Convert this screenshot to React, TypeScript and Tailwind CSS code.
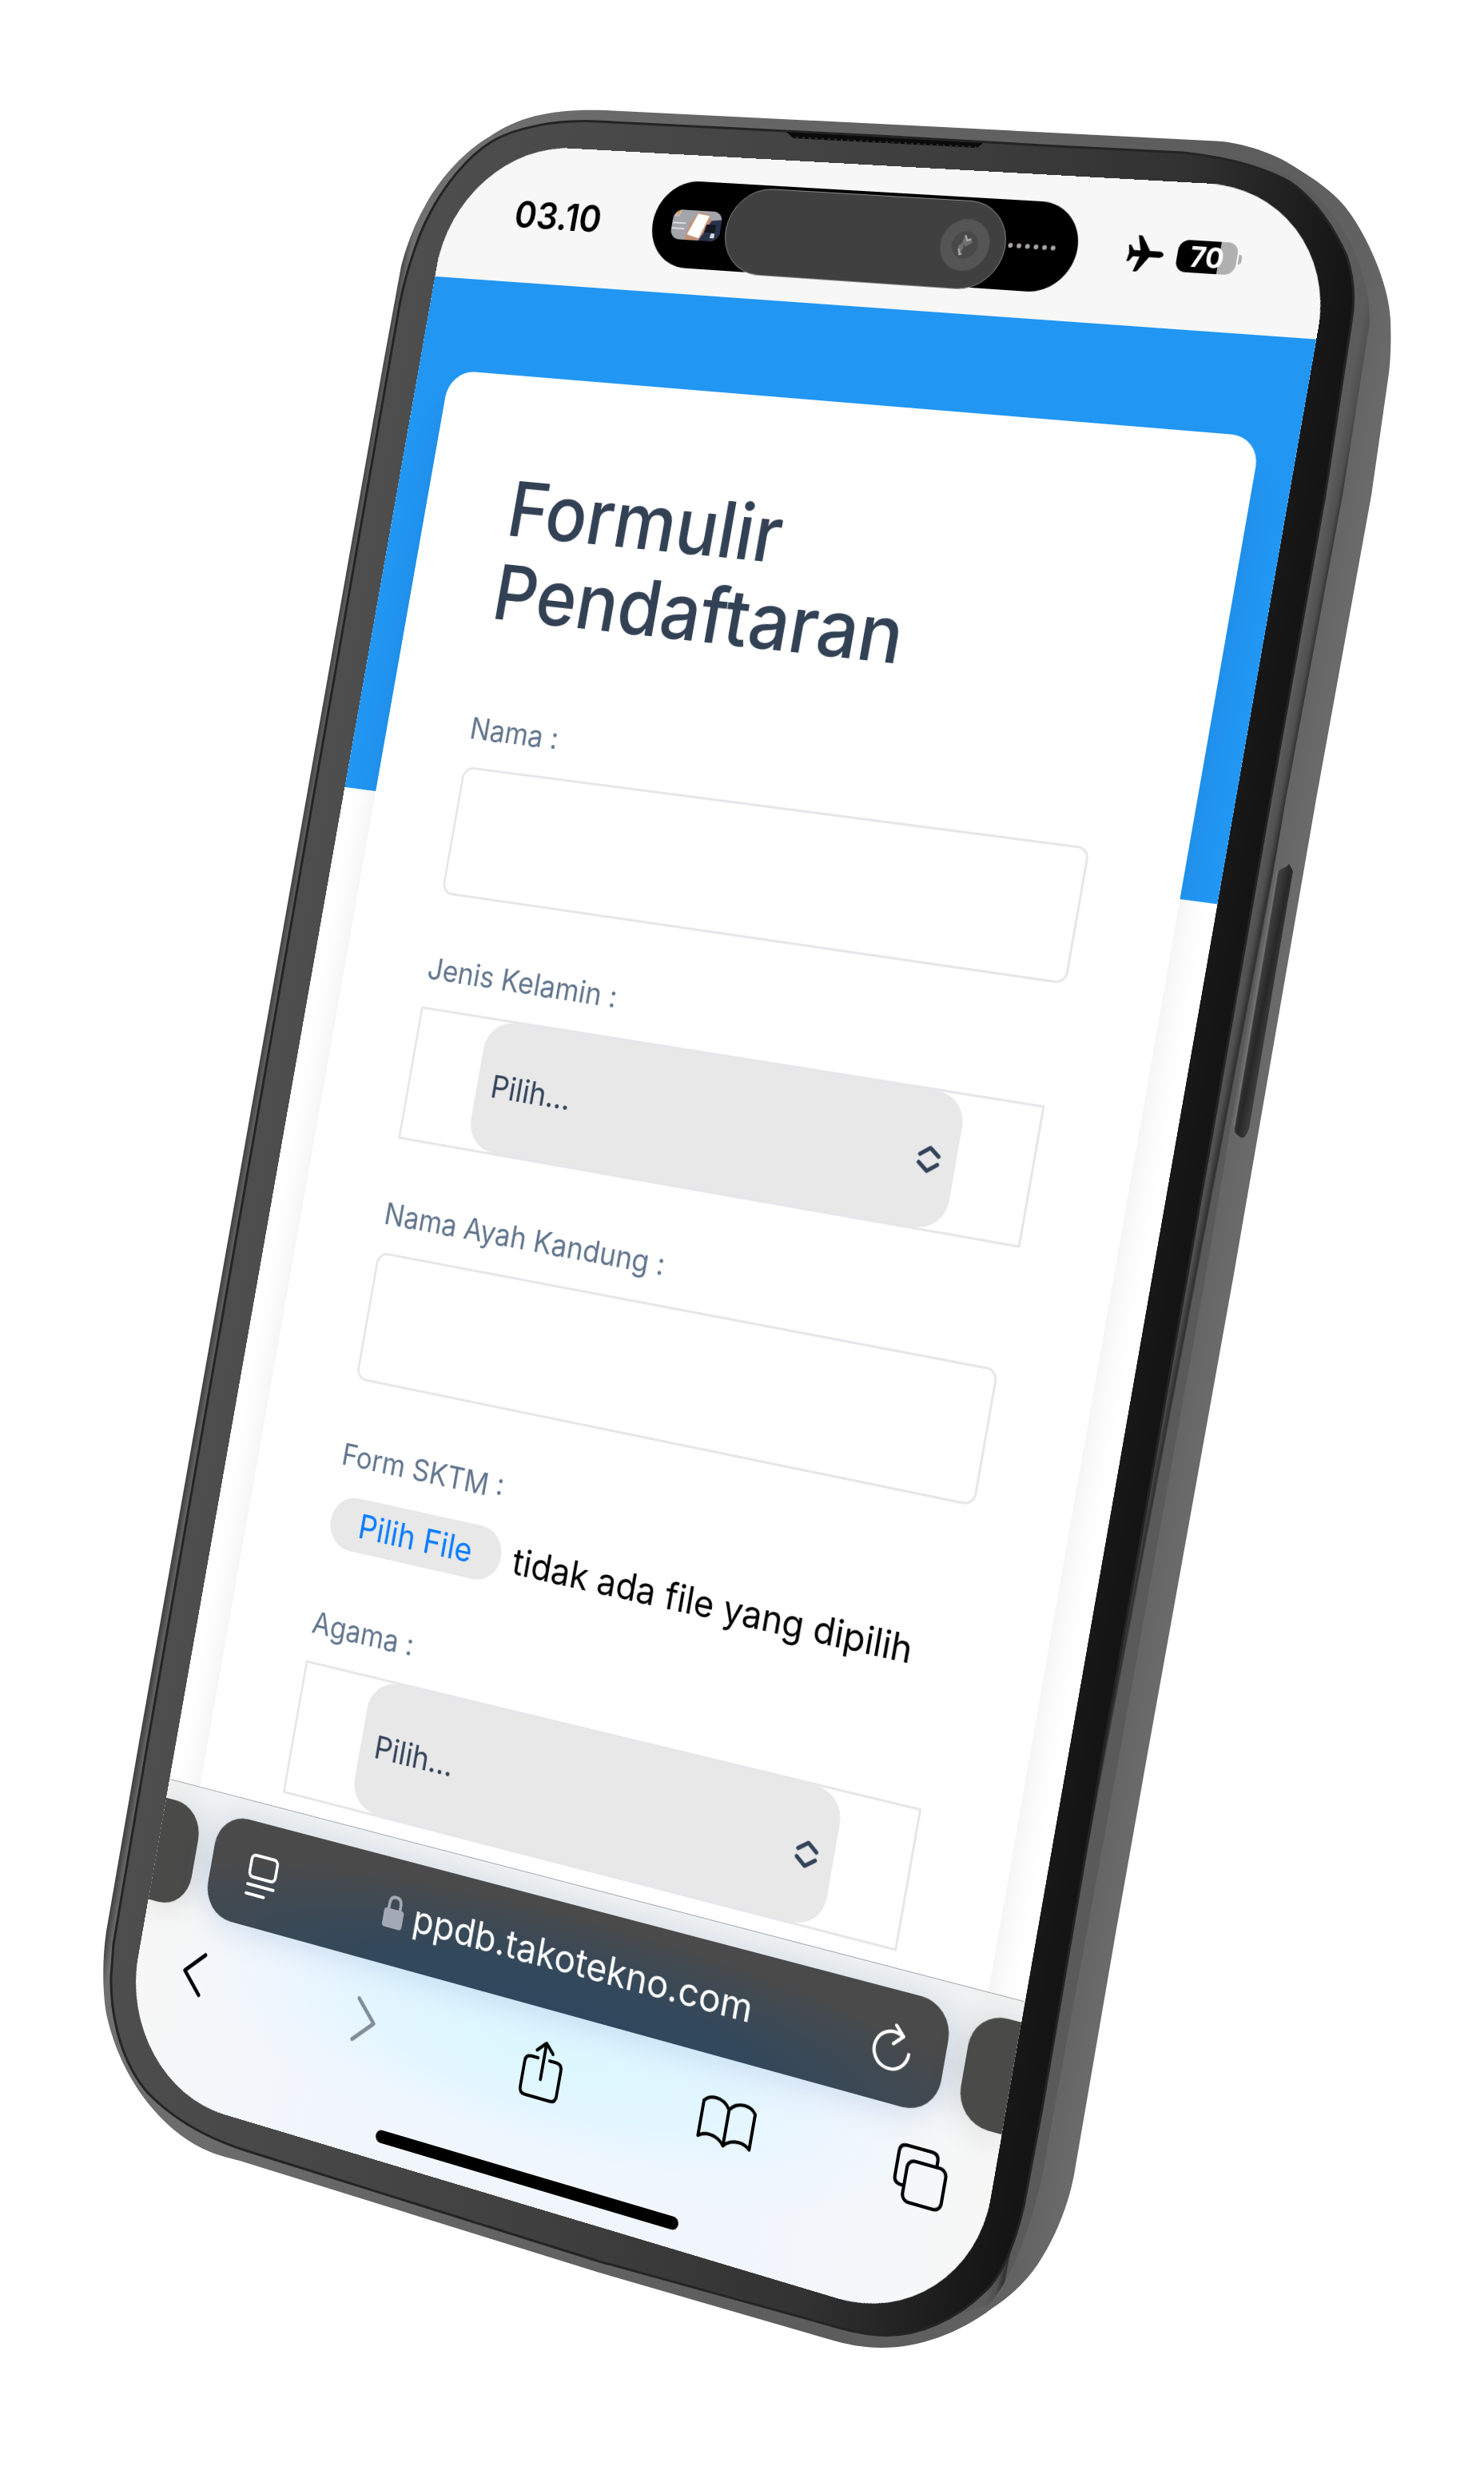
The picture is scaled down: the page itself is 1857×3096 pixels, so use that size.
import { useRef } from 'react'
import type { ReactNode } from 'react'

function DeviceBody() {
  return (
    <svg viewBox="120 140 1617 2816" className="absolute inset-0 size-full overflow-visible" aria-hidden="true">
      <defs>
        <linearGradient id="side" gradientUnits="userSpaceOnUse" x1="480" y1="453" x2="1700" y2="668">
          <stop offset="0" stopColor="#444" />
          <stop offset="0.008" stopColor="#707070" />
          <stop offset="0.3" stopColor="#666" />
          <stop offset="0.8" stopColor="#5c5c5c" />
          <stop offset="0.96" stopColor="#626262" />
          <stop offset="1" stopColor="#6a6a6a" />
        </linearGradient>
        <linearGradient id="ring" gradientUnits="userSpaceOnUse" x1="1590" y1="1000" x2="1611" y2="1004">
          <stop offset="0" stopColor="#5c5c5c" />
          <stop offset="0.55" stopColor="#505050" />
          <stop offset="0.9" stopColor="#303030" />
          <stop offset="1" stopColor="#5a5a5a" />
        </linearGradient>
        <linearGradient id="bezel" gradientUnits="userSpaceOnUse" x1="480" y1="453" x2="1640" y2="658">
          <stop offset="0" stopColor="#4e4e4e" />
          <stop offset="0.5" stopColor="#404040" />
          <stop offset="0.8" stopColor="#323232" />
          <stop offset="0.95" stopColor="#1b1b1b" />
          <stop offset="1" stopColor="#141414" />
        </linearGradient>
        <linearGradient id="key" gradientUnits="userSpaceOnUse" x1="1572" y1="1250" x2="1592" y2="1254">
          <stop offset="0" stopColor="#3c3c3c" />
          <stop offset="0.5" stopColor="#272727" />
          <stop offset="1" stopColor="#3a3a3a" />
        </linearGradient>
      </defs>
      <path
        fill="url(#side)"
        d="M480 453L502 333C520 262 560 202 614 170C650 146 690 136 757 138L1180 159L1529 177C1565 181 1600 195 1622 210C1648 226 1667 240 1680 255C1704 282 1738 350 1740 400C1741 430 1740 450 1738 467L1716 620L1647 1000L1543 1600L1435 2200L1397 2414L1346 2710C1340 2750 1325 2793 1299 2833C1282 2858 1262 2875 1241 2889C1200 2920 1150 2938 1103 2938C1080 2938 1060 2934 1036 2927L750 2844L300 2704C284 2700 268 2696 252 2688C200 2662 150 2600 133 2520C128 2490 128 2450 133 2417L174 2180Z"
      />
      <path
        fill="url(#ring)"
        d="M1502 190C1560 196 1600 208 1630 230C1680 270 1714 335 1714 403L1680 620L1609 1000L1508 1600L1400 2200L1310 2690C1300 2760 1270 2850 1237 2884L1190 2900Z"
      />
      <path
        fill="url(#bezel)"
        stroke="#242424"
        strokeWidth="3"
        d="M185 2180L498 393C504 355 520 300 538 267C556 232 585 196 614 178C640 162 690 149 748 152L1100 170L1323 183L1480 191C1530 196 1575 207 1613 227C1645 248 1670 286 1685 320C1695 350 1695 380 1691 403L1658 620L1590 1000L1485 1600L1379 2200L1304 2639L1281 2761C1272 2800 1255 2848 1232 2868C1200 2900 1150 2926 1098 2922C1075 2920 1055 2915 1036 2909L750 2830L310 2692C262 2677 220 2655 185 2619C155 2585 138 2530 139 2473L142 2433Z"
      />
      <path fill="#0b0b0b" d="M984 165L1230 179L1223 185L993 173Z" />
      <path stroke="#333" strokeWidth="2" strokeDasharray="3 5" d="M996 172L1222 184" />
      <path fill="url(#key)" d="M1600 1090C1604 1086 1608 1087 1613 1081L1618 1090L1563 1412C1560 1420 1558 1424 1554 1424C1548 1420 1545 1419 1545 1413Z" />
      <path stroke="#757575" strokeWidth="1.5" d="M1598 1090L1544 1410" />
    </svg>
  )
}

function StatusBar() {
  return (
    <header className="flex h-[177px] shrink-0 items-center bg-[#f7f7f7]">
      <time className="w-[297px] pl-[100px] text-[48px] leading-none font-semibold text-black">03.10</time>
      <div className="relative flex h-[111px] w-[569px] items-center justify-between rounded-full bg-black pr-[28px] pl-[27px]">
        <svg viewBox="0 0 68 38" className="h-[38px] w-[68px] rounded-[13px] bg-[#a3a5ab]" aria-hidden="true">
          <path fill="#c7b9b2" d="M0 0h12l-4 9H0z" />
          <path fill="#e0a12f" d="M3 0h7l-4 7z" />
          <path fill="#c58f76" d="M20 38l5-22 10-14 13 2 6 8-9 26z" />
          <path fill="#fff" d="M34 4l16 2-10 29-17-4z" />
          <path fill="#27324b" d="M54 12l14-2v28H40z" />
          <path fill="#15181f" d="M48 17h13v10H46z" />
          <path fill="#d9dce2" d="M1 16h18v2H1zM1 23h17v2H1zM56 28h5v6h-6z" />
        </svg>
        <div className="flex gap-[5px]">
          {[0, 1, 2, 3, 4, 5].map((dot) => (
            <i key={dot} className="size-[6px] rounded-full bg-[#a9a3a0]" />
          ))}
        </div>
        <div className="absolute top-[4px] left-[102px] flex h-[110px] w-[375px] items-center justify-end rounded-full border border-[#8a8a8a] bg-[#404040] pr-[20px]">
          <svg viewBox="0 0 64 64" className="size-[64px]" aria-hidden="true">
            <circle cx="32" cy="32" r="32" fill="#555" />
            <circle cx="32" cy="32" r="17" fill="#494949" />
            <path d="M30 22l5 4 4-4 2 7-8 5-5-3zM24 33l4-3 3 5-3 8-4-4z" fill="#707070" />
            <path d="M31 20l3 6 5-1M25 37l2 7 3-1" fill="none" stroke="#b5b5b5" strokeWidth="2" />
          </svg>
        </div>
      </div>
      <div className="flex flex-1 items-center gap-[17px] pl-[63px]">
        <svg viewBox="0 0 50 48" className="h-[44px] w-[46px]" aria-label="Mode pesawat">
          <path d="M45 20H31L18 1q-1-1-3-1h-3l6 20H9L4 13H1l2 11-2 11h3l5-7h9l-6 20h3q2 0 3-1l13-19h14q5-1 5-4t-5-4z" />
        </svg>
        <div className="flex items-center gap-[2px]">
          <div className="flex h-[39px] w-[74px] items-center justify-center rounded-[13px] bg-[linear-gradient(90deg,#000_70%,#b0b0b0_70%)] text-[34px] leading-none font-bold text-white">
            70
          </div>
          <i className="h-[12px] w-[4px] rounded-r-full bg-[#b0b0b0]" />
        </div>
      </div>
    </header>
  )
}

function Field({ id, label, children }: { id: string; label: string; children: ReactNode }) {
  return (
    <div className="flex flex-col gap-[22px]">
      <label htmlFor={id} className="text-[38px] leading-[55px] text-[#62758d]">
        {label}
      </label>
      {children}
    </div>
  )
}

function TextField({ id, label }: { id: string; label: string }) {
  return (
    <Field id={id} label={label}>
      <input
        id={id}
        type="text"
        className="h-[166px] w-full rounded-[15px] border-[3px] border-[#e6e6eb] bg-white px-[42px] text-[40px] text-[#33435a]"
      />
    </Field>
  )
}

function SelectField({ id, label, options }: { id: string; label: string; options: string[] }) {
  return (
    <Field id={id} label={label}>
      <div className="h-[172px] border-[3px] border-[#e6e6eb] px-[95px]">
        <div className="relative h-full">
          <select
            id={id}
            className="size-full appearance-none rounded-[38px] bg-[#e8e8e8] px-[20px] text-[40px] text-[#33435a]"
          >
            <option>Pilih...</option>
            {options.map((option) => (
              <option key={option}>{option}</option>
            ))}
          </select>
          <svg
            viewBox="0 0 30 36"
            className="pointer-events-none absolute top-1/2 right-[20px] h-[36px] w-[30px] -translate-y-1/2"
            fill="none"
            stroke="#33435a"
            strokeWidth="5"
            strokeLinecap="round"
            strokeLinejoin="round"
            aria-hidden="true"
          >
            <path d="M3 13L15 4l12 9M3 23l12 9 12-9" />
          </svg>
        </div>
      </div>
    </Field>
  )
}

function FileField({ id, label }: { id: string; label: string }) {
  const input = useRef<HTMLInputElement>(null)
  return (
    <Field id={id} label={label}>
      <div className="flex h-[72px] items-center gap-[17px]">
        <input ref={input} id={id} type="file" className="sr-only" />
        <button
          type="button"
          onClick={() => input.current?.click()}
          className="h-[68px] w-[246px] shrink-0 rounded-full bg-[#e8e8e8] text-[42px] leading-none whitespace-nowrap text-[#087cff]"
        >
          Pilih File
        </button>
        <span className="text-[46px] leading-none whitespace-nowrap text-black">tidak ada file yang dipilih</span>
      </div>
    </Field>
  )
}

function RegistrationPage() {
  return (
    <main className="h-[1977px] shrink-0 overflow-hidden bg-[linear-gradient(#2196f3_673px,#fff_673px)] px-[46px] pt-[120px]">
      <form className="h-[2400px] rounded-[36px] bg-white px-[120px] pt-[117px] shadow-[0_44px_44px_rgba(0,0,0,0.08)]">
        <h1 className="mb-[96px] text-[97px] leading-[108px] font-medium text-[#334155]">
          Formulir
          <br />
          Pendaftaran
        </h1>
        <div className="flex flex-col gap-[69px]">
          <TextField id="nama" label="Nama :" />
          <SelectField id="jenis-kelamin" label="Jenis Kelamin :" options={['Laki-laki', 'Perempuan']} />
          <TextField id="nama-ayah" label="Nama Ayah Kandung :" />
          <FileField id="form-sktm" label="Form SKTM :" />
          <SelectField id="agama" label="Agama :" options={['Islam', 'Kristen', 'Katolik', 'Hindu', 'Buddha']} />
        </div>
      </form>
    </main>
  )
}

function ToolButton({ label, children }: { label: string; children: ReactNode }) {
  return (
    <button type="button" aria-label={label} className="flex size-[78px] items-center justify-center">
      <svg
        viewBox="0 0 78 78"
        className="size-full"
        fill="none"
        stroke="#000"
        strokeWidth="4"
        strokeLinecap="round"
        strokeLinejoin="round"
        aria-hidden="true"
      >
        {children}
      </svg>
    </button>
  )
}

function BrowserBar() {
  return (
    <footer className="flex grow flex-col items-center border-t border-[#a9acb0] bg-[radial-gradient(ellipse_44%_38%_at_50%_52%,#dcf7ff_0%,#e2f6ff_45%,rgba(236,246,255,0.7)_75%,rgba(243,246,251,0)_100%),linear-gradient(90deg,#f7f7f6,#f1f6fd_25%,#f1f6fd_75%,#f7f7f6)]">
      <div className="flex w-full gap-[25px] bg-[linear-gradient(#f0f2f2,rgba(224,229,234,0.7)_60%,rgba(224,229,234,0))] pt-[24px]">
        <div className="h-[133px] w-[57px] rounded-r-[42px] bg-[#4a4a49] shadow-[0_6px_40px_rgba(60,60,60,0.14)]" />
        <div className="flex h-[133px] flex-1 items-center justify-between rounded-[42px] bg-[radial-gradient(ellipse_62%_100%_at_50%_108%,#2e475f_0%,#33485b_45%,#454a4e_90%,#4a4a4a_100%)] pr-[42px] pl-[54px] shadow-[0_6px_40px_rgba(70,120,190,0.2)]">
          <button type="button" aria-label="Menu halaman">
            <svg viewBox="0 0 44 56" className="h-[56px] w-[44px]" fill="none" stroke="#fff" strokeWidth="4" strokeLinecap="round" aria-hidden="true">
              <rect x="3" y="3" width="38" height="28" rx="6" />
              <path d="M3 41h38M3 53h26" />
            </svg>
          </button>
          <a href="#" className="flex items-center gap-[14px] text-[48px] leading-none text-white">
            <svg viewBox="0 0 28 42" className="h-[42px] w-[28px]" aria-hidden="true">
              <rect y="17" width="28" height="24" rx="4" fill="#a3a9b6" />
              <path d="M6 18v-7q0-9 8-9t8 9v7" fill="none" stroke="#a3a9b6" strokeWidth="4" />
            </svg>
            ppdb.takotekno.com
          </a>
          <button type="button" aria-label="Muat ulang">
            <svg viewBox="0 0 50 58" className="h-[58px] w-[50px]" fill="none" stroke="#fff" strokeWidth="4" strokeLinecap="round" strokeLinejoin="round" aria-hidden="true">
              <path d="M47 33A22 22 0 1 1 34 13M26 3l11 11-11 11" />
            </svg>
          </button>
        </div>
        <div className="h-[133px] w-[59px] rounded-l-[42px] bg-[#4a4a49] shadow-[0_6px_40px_rgba(60,60,60,0.14)]" />
      </div>
      <nav className="flex h-[152px] w-full items-center justify-between pr-[50px] pl-[46px]">
        <ToolButton label="Kembali">
          <path strokeWidth="5" d="M51 13L25 39l26 26" />
        </ToolButton>
        <ToolButton label="Maju">
          <path strokeWidth="5" stroke="#808c96" d="M27 13l26 26-26 26" />
        </ToolButton>
        <ToolButton label="Bagikan">
          <path d="M31 24H22q-8 0-8 8v32q0 8 8 8h34q8 0 8-8V32q0-8-8-8h-9M39 49V5M28 15L39 4l11 11" />
        </ToolButton>
        <ToolButton label="Bookmark">
          <path d="M39 22Q32 12 20 12 10 12 5 19v43q6-5 14-5 13 0 20 9 7-9 20-9 8 0 14 5V19q-5-7-15-7-12 0-19 10zv44" />
        </ToolButton>
        <ToolButton label="Tab">
          <path d="M20 52h-3q-9 0-9-9V14q0-9 9-9h31q9 0 9 9v7" />
          <rect x="21" y="21" width="49" height="49" rx="9" />
        </ToolButton>
      </nav>
      <div className="mt-[50px] h-[16px] w-[420px] rounded-full bg-black" />
    </footer>
  )
}

export default function App() {
  return (
    <div className="flex min-h-screen items-center justify-center overflow-hidden bg-white font-['Inter','Liberation_Sans',sans-serif]">
      <div className="relative h-[2816px] w-[1617px] shrink-0">
        <DeviceBody />
        <div className="absolute top-0 left-0 flex h-[2552px] w-[1179px] origin-top-left [transform:matrix3d(0.8112,0.0435986,0,-0.000081247,-0.168013,0.948355,0,-0.00000114393,0,0,1,0,454,38,0,1)] flex-col overflow-hidden rounded-[165px] bg-white">
          <StatusBar />
          <RegistrationPage />
          <BrowserBar />
        </div>
      </div>
    </div>
  )
}
